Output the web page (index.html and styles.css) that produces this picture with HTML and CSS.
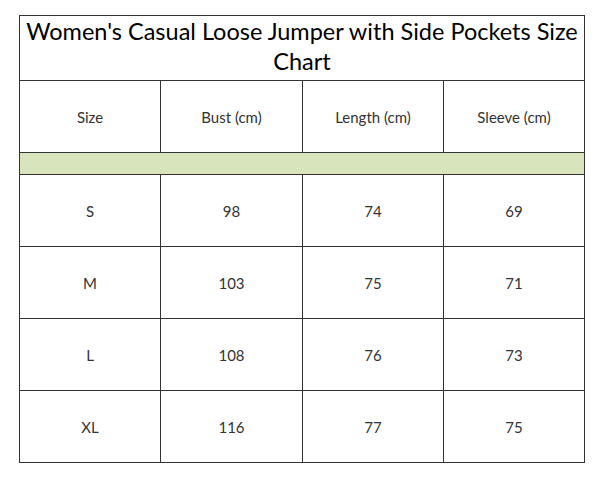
FILE: index.html
```html
<!DOCTYPE html>
<html>
<head>
<meta charset="utf-8">
<link rel="stylesheet" href="styles.css">
</head>
<body>
<div class="wrap">
<table class="chart">
  <colgroup>
    <col class="c1"><col class="c2"><col class="c3"><col class="c4">
  </colgroup>
  <tr class="title-row"><th colspan="4" class="title">Women's Casual Loose Jumper with Side Pockets Size Chart</th></tr>
  <tr class="head-row"><td>Size</td><td>Bust (cm)</td><td>Length (cm)</td><td>Sleeve (cm)</td></tr>
  <tr class="green-row"><td colspan="4"></td></tr>
  <tr class="data-row"><td>S</td><td>98</td><td>74</td><td>69</td></tr>
  <tr class="data-row"><td>M</td><td>103</td><td>75</td><td>71</td></tr>
  <tr class="data-row"><td>L</td><td>108</td><td>76</td><td>73</td></tr>
  <tr class="data-row"><td>XL</td><td>116</td><td>77</td><td>75</td></tr>
</table>
</div>
</body>
</html>
```
FILE: styles.css
```css
html, body { margin: 0; padding: 0; background: #fff; }
.wrap { padding: 15px 0 0 19px; }
.chart {
  border-collapse: collapse;
  table-layout: fixed;
  width: 565px;
  font-family: Lato, "Open Sans", sans-serif;
  color: #333;
  border: 1px solid #555;
}
.c1 { width: 141px; }
.c2 { width: 142px; }
.c3 { width: 141px; }
.c4 { width: 141px; }
.chart td, .chart th {
  border: 1px solid #333;
  text-align: center;
  padding: 0;
}
.title {
  font-weight: normal;
  font-size: 23.5px;
  line-height: 30px;
  color: #000;
  height: 64px;
  vertical-align: top;
  padding-top: 2px;
}
.head-row td { height: 71px; font-size: 15px; }
.green-row td { height: 21px; background: #d8e4bc; }
.data-row td { height: 71px; font-size: 15px; }
```
